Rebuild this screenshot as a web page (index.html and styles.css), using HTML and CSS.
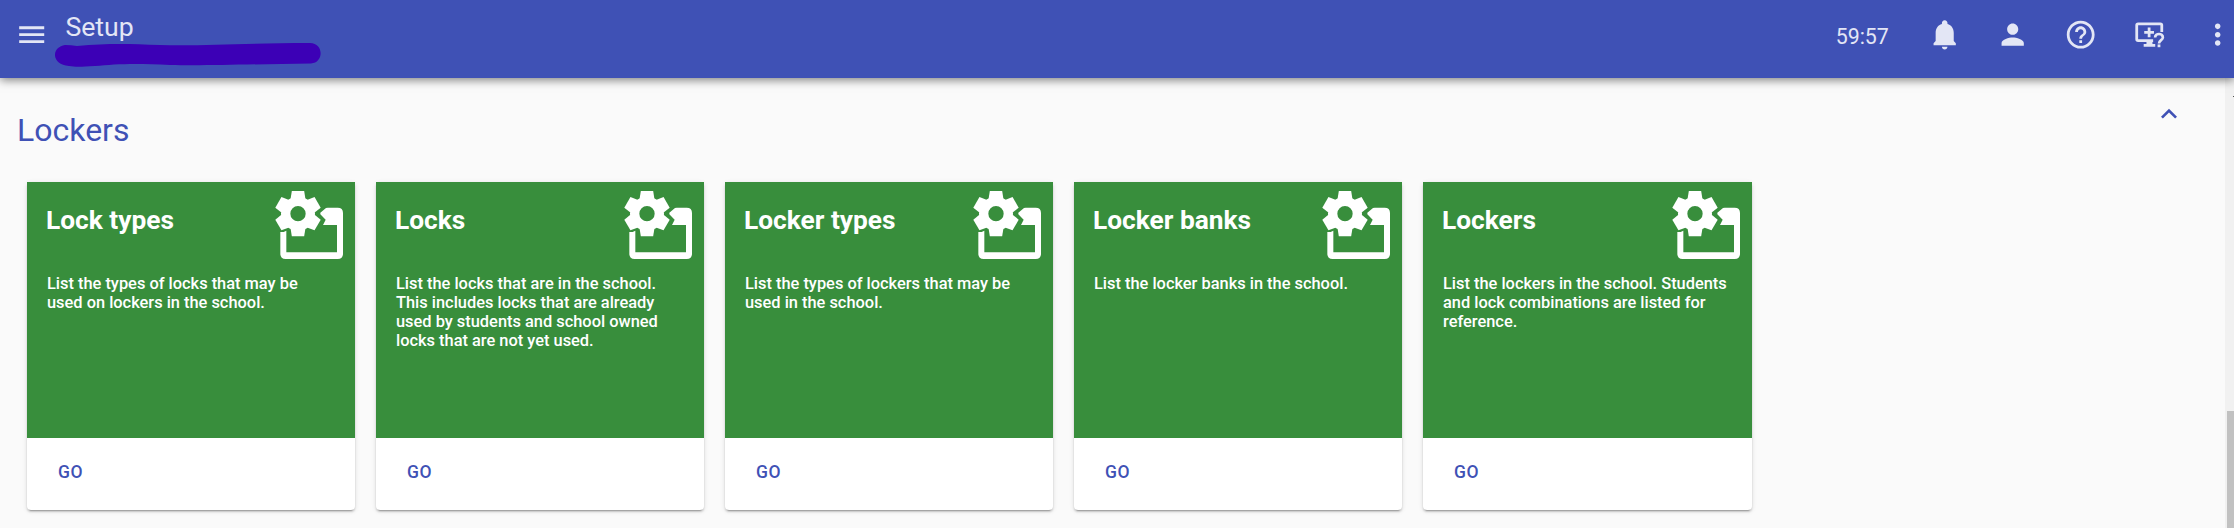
FILE: index.html
```html
<!DOCTYPE html>
<html lang="en">
<head>
<meta charset="utf-8">
<title>Setup</title>
<link rel="stylesheet" href="styles.css">
</head>
<body>
<svg class="defs" width="0" height="0">
  <symbol id="setup-icon" viewBox="45 30 207 210">
    <g transform="translate(114 101)">
      <circle r="37" fill="none" stroke="currentColor" stroke-width="28"/>
      <path id="tooth" d="M-18.500 -68H18.500L22 -46L14 -32H-14L-22 -46Z"/>
      <use href="#tooth" transform="rotate(60)"/>
      <use href="#tooth" transform="rotate(120)"/>
      <use href="#tooth" transform="rotate(180)"/>
      <use href="#tooth" transform="rotate(240)"/>
      <use href="#tooth" transform="rotate(300)"/>
    </g>
    <path d="M181 98L198 84Q200 83 203 83H233Q249 83 249 99V221Q249 237 233 237H77Q61 237 61 221V156L71 156L79 152V217H231V135H189L197 119L181 103Z"/>
  </symbol>
</svg>
<header class="toolbar">
  <svg class="icon" viewBox="0 0 24 24"><path d="M3 18h18v-2H3v2zm0-5h18v-2H3v2zm0-7v2h18V6H3z"/></svg>
  <div class="heading">
    <h1>Setup</h1>
    <svg class="redaction" viewBox="0 0 266 25"><path d="M10 2Q16 2 22 3C55 0 75 1 105 2C150 3 190 0 255 0C269 0 269 20 256 20.500C200 21 150 23 115 22C80 20 60 21 40 23C25 24 20 24 14 23C-4 22-4 4 10 2Z"/></svg>
  </div>
  <div class="actions">
    <span class="timer">59:57</span>
    <svg class="icon" viewBox="0 0 24 24"><path d="M12 23c1.100 0 2-.9 2-2h-4c0 1.100.9 2 2 2zm6.500-6v-6c0-3.070-1.640-5.640-4.500-6.320V4c0-.83-.67-2-2-2s-2 1.170-2 2v.68C7.130 5.360 5.500 7.920 5.500 11v6L4 18.500v1.500h16v-1.500z" transform="translate(0 -.4)"/></svg>
    <svg class="icon" viewBox="0 0 24 24"><path d="M12 12c2.210 0 4-1.790 4-4s-1.790-4-4-4-4 1.790-4 4 1.790 4 4 4zm0 2c-2.670 0-8 1.340-8 4v2h16v-2c0-2.660-5.330-4-8-4z"/></svg>
    <svg class="icon" viewBox="0 0 24 24"><path d="M11 18h2v-2h-2v2zm1-16C6.480 2 2 6.480 2 12s4.480 10 10 10 10-4.480 10-10S17.520 2 12 2zm0 18c-4.410 0-8-3.590-8-8s3.590-8 8-8 8 3.590 8 8-3.590 8-8 8zm0-14c-2.210 0-4 1.790-4 4h2c0-1.100.9-2 2-2s2 .9 2 2c0 2-3 1.750-3 5h2c0-2.250 3-2.500 3-5 0-2.210-1.790-4-4-4z"/></svg>
    <svg class="icon" viewBox="0 0 24 24"><g transform="translate(.4 0)"><path d="M4 3.300H20Q22 3.300 22 5.300V10H20V5.300H4V15.200H14.800V17.200H14.300V18.700H16.300V20.700H8V18.700H10V17.200H4Q2 17.200 2 15.200V5.300Q2 3.300 4 3.300ZM10.900 6.800H12.900V9.300H15.400V11.300H12.900V13.800H10.900V11.300H8.400V9.300H10.900Z"/><path class="line" d="M16.200 14C16.200 10.700 21.800 10.700 21.800 14C21.800 15.800 19 16.100 19 18.300"/><path d="M18 19h2v2h-2z"/></g></svg>
    <svg class="icon" viewBox="0 0 24 24"><path d="M12 8c1.100 0 2-.9 2-2s-.9-2-2-2-2 .9-2 2 .9 2 2 2zm0 2c-1.100 0-2 .9-2 2s.9 2 2 2 2-.9 2-2-.9-2-2-2zm0 6c-1.100 0-2 .9-2 2s.9 2 2 2 2-.9 2-2-.9-2-2-2z"/></svg>
  </div>
</header>
<div class="viewport">
  <main class="content">
    <div class="section-head">
      <h2>Lockers</h2>
      <svg class="chevron" viewBox="0 0 24 24"><path d="M12 8l-6 6 1.410 1.410L12 10.830l4.590 4.580L18 14z"/></svg>
    </div>
    <div class="cards">
      <article class="card">
        <div class="card-body"><div class="card-top"><h3>Lock types</h3><svg class="card-icon"><use href="#setup-icon"/></svg></div>
          <p>List the types of locks that may be<br>used on lockers in the school.</p></div>
        <div class="card-actions"><a>GO</a></div>
      </article>
      <article class="card">
        <div class="card-body"><div class="card-top"><h3>Locks</h3><svg class="card-icon"><use href="#setup-icon"/></svg></div>
          <p>List the locks that are in the school.<br>This includes locks that are already<br>used by students and school owned<br>locks that are not yet used.</p></div>
        <div class="card-actions"><a>GO</a></div>
      </article>
      <article class="card">
        <div class="card-body"><div class="card-top"><h3>Locker types</h3><svg class="card-icon"><use href="#setup-icon"/></svg></div>
          <p>List the types of lockers that may be<br>used in the school.</p></div>
        <div class="card-actions"><a>GO</a></div>
      </article>
      <article class="card">
        <div class="card-body"><div class="card-top"><h3>Locker banks</h3><svg class="card-icon"><use href="#setup-icon"/></svg></div>
          <p>List the locker banks in the school.</p></div>
        <div class="card-actions"><a>GO</a></div>
      </article>
      <article class="card">
        <div class="card-body"><div class="card-top"><h3>Lockers</h3><svg class="card-icon"><use href="#setup-icon"/></svg></div>
          <p>List the lockers in the school. Students<br>and lock combinations are listed for<br>reference.</p></div>
        <div class="card-actions"><a>GO</a></div>
      </article>
    </div>
  </main>
  <div class="scrollbar"><div class="tick"></div><div class="thumb"></div></div>
</div>
</body>
</html>
```
FILE: styles.css
```css
* { box-sizing: border-box; }
body {
  margin: 0;
  height: 528px;
  overflow: hidden;
  display: flex;
  flex-direction: column;
  background: #fafafa;
  font-family: Roboto, "Liberation Sans", sans-serif;
}
h1, h2, h3, p { margin: 0; }
.defs { position: absolute; }

.toolbar {
  position: relative;
  z-index: 1;
  flex: none;
  height: 78px;
  display: flex;
  align-items: flex-start;
  padding-left: 15px;
  background: #3f51b5;
  color: #e3e6f5;
  box-shadow: 0 2px 9px rgba(0, 0, 0, .5);
}
.icon {
  flex: none;
  width: 33.400px;
  height: 33.400px;
  margin-top: 18.300px;
  fill: #e3e6f5;
}
.icon .line { fill: none; stroke: #e3e6f5; stroke-width: 1.900; }
.heading {
  display: flex;
  flex-direction: column;
  padding: 11px 0 0 7px;
}
.heading h1 {
  padding-left: 10px;
  font-size: 26.670px;
  line-height: 32px;
  font-weight: 400;
}
.redaction { width: 266px; height: 25px; fill: #3c00b6; }
.actions {
  display: flex;
  gap: 34.850px;
  margin-left: auto;
}
.timer {
  padding-top: 23px;
  margin-right: 4px;
  font-size: 21.330px;
  line-height: 28px;
}

.viewport { flex: 1; display: flex; min-height: 0; }
.content { flex: 1; }
.section-head {
  height: 104px;
  display: flex;
  justify-content: space-between;
  padding: 32px 40px 0 17px;
}
.section-head h2 {
  font-size: 32px;
  line-height: 40px;
  font-weight: 400;
  color: #3f51b5;
}
.chevron { width: 32px; height: 32px; margin-top: -12.500px; fill: #3f51b5; }
.cards {
  display: grid;
  grid-template-columns: repeat(4, 328px) 329px;
  gap: 21px;
  padding-left: 27px;
}
.card {
  height: 328px;
  border-radius: 4px;
  background: #fff;
  box-shadow: 0 3px 1px -2px rgba(0, 0, 0, .2), 0 2px 2px rgba(0, 0, 0, .14), 0 1px 5px rgba(0, 0, 0, .12);
}
.card-body { height: 256px; background: #388e3c; color: #fff; }
.card-top {
  height: 92px;
  display: flex;
  justify-content: space-between;
  padding: 8px 11px 0 19px;
}
.card-top h3 {
  padding-top: 14px;
  font-size: 26.300px;
  line-height: 32px;
  font-weight: 700;
}
.card-icon { width: 69px; height: 70px; fill: currentColor; }
.card-body p {
  padding-left: 20px;
  font-size: 16.400px;
  line-height: 19px;
  font-weight: 500;
}
.card-actions { padding: 24px 0 0 31px; }
.card-actions a {
  font-size: 17.500px;
  line-height: 20px;
  font-weight: 500;
  letter-spacing: .6px;
  color: #3f51b5;
}
.scrollbar {
  width: 9px;
  display: flex;
  flex-direction: column;
  justify-content: space-between;
  align-items: flex-end;
  background: #f1f1f1;
}
.tick { width: 1px; height: 1px; margin-top: 18px; background: #505050; }
.thumb { width: 7px; height: 117px; background: #c1c1c1; }
```
